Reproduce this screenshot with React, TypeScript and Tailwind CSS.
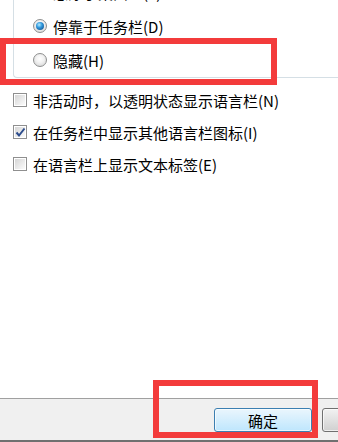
import React from "react";

const font = { fontFamily: '"Noto Sans CJK SC", "Noto Sans", sans-serif' };

function Radio({ checked }: { checked?: boolean }) {
  return (
    <span className="flex h-[14px] w-[14px] shrink-0 items-center justify-center rounded-full border border-[#8e8f8f] bg-[radial-gradient(circle_at_50%_40%,#ffffff_0%,#f2f2f2_40%,#cfcfcf_100%)]">
      {checked && (
        <span className="h-[8px] w-[8px] rounded-full bg-[radial-gradient(circle_at_40%_35%,#b4ecff_0%,#2f97dc_40%,#0d3f78_100%)]" />
      )}
    </span>
  );
}

function Checkbox({ checked }: { checked?: boolean }) {
  return (
    <span className="flex h-[14px] w-[14px] shrink-0 items-center justify-center border border-[#8f8f8f] bg-white p-[1px]">
      <span className="relative flex h-full w-full items-center justify-center bg-gradient-to-br from-[#d6d6d6] to-[#fbfbfb]">
        {checked && (
          <svg width="11" height="11" viewBox="0 0 11 11" className="absolute">
            <path d="M1.5 5.5 L4 8.5 L9.5 1.5" fill="none" stroke="#2c4c8c" strokeWidth="2" />
          </svg>
        )}
      </span>
    </span>
  );
}

const radios = [
  { label: "悬浮于桌面上(F)", checked: false },
  { label: "停靠于任务栏(D)", checked: true },
  { label: "隐藏(H)", checked: false },
];

const checks = [
  { label: "非活动时，以透明状态显示语言栏(N)", checked: false },
  { label: "在任务栏中显示其他语言栏图标(I)", checked: true },
  { label: "在语言栏上显示文本标签(E)", checked: false },
];

export default function App() {
  return (
    <div
      className="relative flex h-[442px] w-[338px] flex-col overflow-hidden bg-white text-[15px] leading-none text-black"
      style={font}
    >
      {/* group box, top cut off by the crop */}
      <div className="-mt-[25px] ml-[13px] flex flex-col rounded-bl-[4px] border-b border-l border-[#d5dfe5] pl-[19px]">
        {radios.map((r) => (
          <div key={r.label} className="flex h-[34px] items-center gap-[6px]">
            <Radio checked={r.checked} />
            <span>{r.label}</span>
          </div>
        ))}
      </div>

      <div className="mt-[6px] flex flex-col pl-[13px]">
        {checks.map((c) => (
          <div key={c.label} className="flex h-[32px] items-center gap-[6px]">
            <Checkbox checked={c.checked} />
            <span>{c.label}</span>
          </div>
        ))}
      </div>

      <div className="flex-1" />

      <div className="flex h-[44px] gap-[10px] border-t border-b-2 border-t-[#a0a0a0] border-b-[#707070] bg-[#f0f0f0] pl-[214px] pt-[9px]">
        <button className="flex h-[24px] w-[98px] shrink-0 items-center justify-center rounded-[3px] border border-[#3c7fb1] bg-gradient-to-b from-[#eaf6fd] to-[#bee6fd] shadow-[inset_0_0_0_1px_#ffffffaa]">
          确定
        </button>
        <button className="flex h-[24px] w-[98px] shrink-0 items-center justify-center rounded-[3px] border border-[#707070] bg-gradient-to-b from-[#f2f2f2] to-[#d0d0d0] shadow-[inset_0_0_0_1px_#ffffffaa]">
          取消
        </button>
      </div>

      {/* red annotation frames */}
      <div className="absolute left-0 top-[38px] h-[47px] w-[277px] border-[6px] border-[#f33b3b]" />
      <div className="absolute left-[153px] top-[380px] h-[58px] w-[165px] border-[6px] border-[#f33b3b]" />
    </div>
  );
}
